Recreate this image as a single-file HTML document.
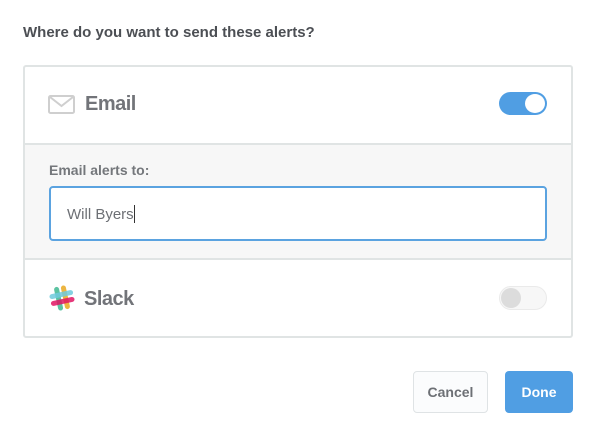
<!DOCTYPE html>
<html><head><style>
*{margin:0;padding:0;box-sizing:border-box}
body{width:594px;height:432px;background:#fff;font-family:"Liberation Sans",sans-serif;position:relative;overflow:hidden}
.a{position:absolute}
</style></head><body>
<div class="a" style="left:23px;top:24px;font-size:15px;font-weight:bold;color:#4c4f54">Where do you want to send these alerts?</div>
<div class="a" style="left:23px;top:65px;width:550px;height:273px;border:2px solid #e0e4e4;border-radius:3px;overflow:hidden">
  <div class="a" style="left:0;top:76px;width:100%;height:117px;background:#f7f7f7;border-top:2px solid #e0e4e4;border-bottom:2px solid #e0e4e4"></div>
</div>
<svg class="a" style="left:48px;top:95px" width="27" height="19" viewBox="0 0 27 19"><rect x="1" y="1" width="25" height="17" rx="1.5" fill="none" stroke="#cfcfcf" stroke-width="2"/><path d="M2 2 L13.5 11 L25 2" fill="none" stroke="#cfcfcf" stroke-width="2"/></svg>
<div class="a" style="left:85px;top:93px;font-size:20px;font-weight:bold;color:#727479;letter-spacing:-0.5px">Email</div>
<div class="a" style="left:499px;top:92px;width:48px;height:23px;border-radius:12px;background:#509ee3"></div>
<div class="a" style="left:525px;top:94px;width:20px;height:19px;border-radius:50%;background:#fff"></div>
<div class="a" style="left:49px;top:162px;font-size:14px;font-weight:bold;color:#74777b">Email alerts to:</div>
<div class="a" style="left:49px;top:186px;width:498px;height:55px;border:2px solid #5ba3e0;border-radius:4px;background:#fff"></div>
<div class="a" style="left:67px;top:205px;font-size:15px;color:#6d7075">Will Byers<span style="display:inline-block;width:1px;height:18px;background:#333;vertical-align:-4px"></span></div>
<svg class="a" style="left:49px;top:285px" width="26" height="26" viewBox="0 0 26 26">
<g transform="rotate(-12 13 13)">
<rect x="7" y="1" width="5" height="24" rx="2.5" fill="#3eb891" opacity=".85"/>
<rect x="14" y="1" width="5" height="24" rx="2.5" fill="#e9a820" opacity=".85"/>
<rect x="1" y="7" width="24" height="5" rx="2.5" fill="#6ecadc" opacity=".85"/>
<rect x="1" y="14" width="24" height="5" rx="2.5" fill="#e01563" opacity=".85"/>
</g>
</svg>
<div class="a" style="left:84px;top:288px;font-size:20px;font-weight:bold;color:#727479;letter-spacing:-0.5px">Slack</div>
<div class="a" style="left:499px;top:286px;width:48px;height:24px;border-radius:12px;background:#f7f7f7;border:1px solid #eaeaea"></div>
<div class="a" style="left:501px;top:288px;width:20px;height:20px;border-radius:50%;background:#dcdcdc"></div>
<div class="a" style="left:413px;top:371px;width:75px;height:42px;border:1px solid #dfe3e5;border-radius:4px;background:#fbfcfd;color:#6d7075;font-size:14px;font-weight:bold;text-align:center;line-height:40px">Cancel</div>
<div class="a" style="left:505px;top:371px;width:68px;height:42px;border-radius:4px;background:#509ee3;color:#fff;font-size:14px;font-weight:bold;text-align:center;line-height:42px">Done</div>
</body></html>
